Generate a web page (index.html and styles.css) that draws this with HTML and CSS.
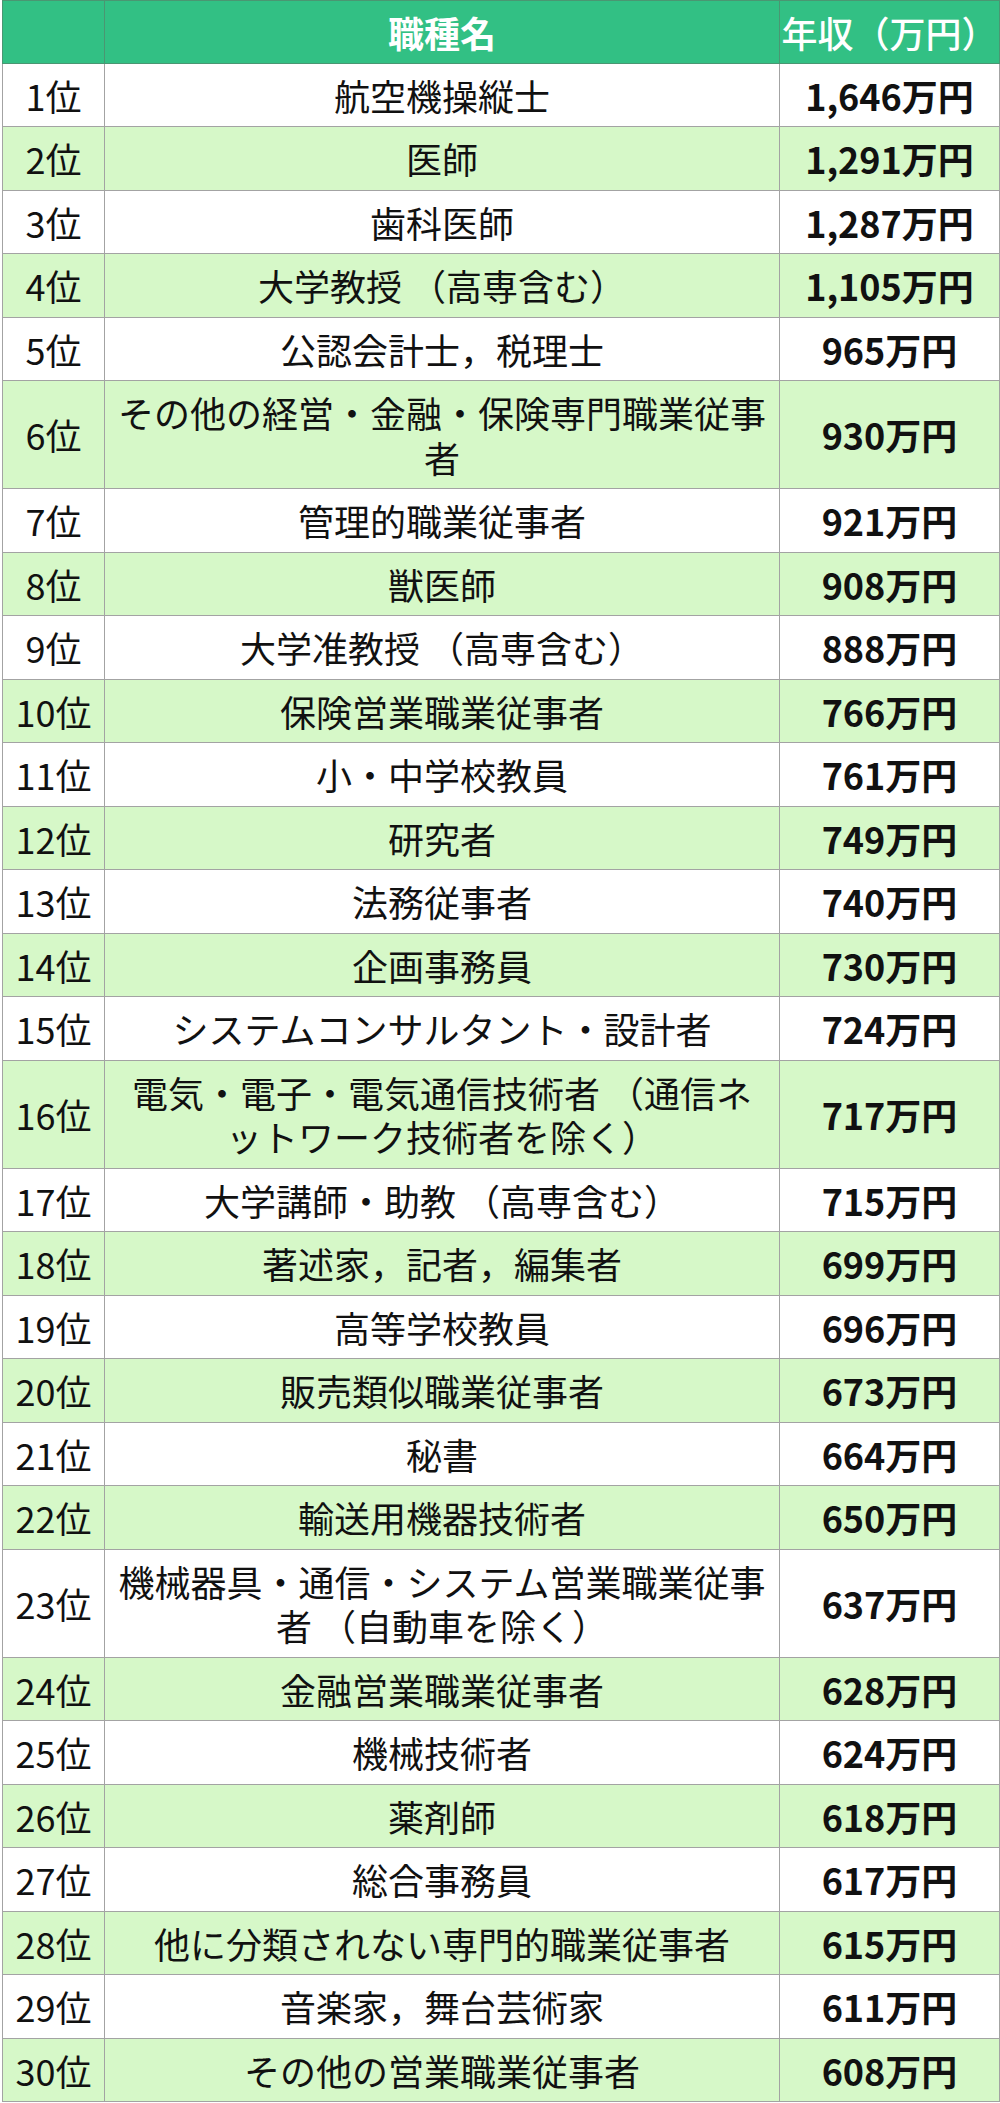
FILE: index.html
```html
<!DOCTYPE html>
<html lang="ja">
<head>
<meta charset="utf-8">
<title>職種別年収ランキング</title>
<link rel="stylesheet" href="styles.css">
</head>
<body>
<table class="rank-table">
  <colgroup>
    <col class="col-rank">
    <col class="col-job">
    <col class="col-pay">
  </colgroup>
  <thead>
    <tr>
      <th class="h-rank"></th>
      <th class="h-job">職種名</th>
      <th class="h-pay">年収（万円）</th>
    </tr>
  </thead>
  <tbody>
    <tr><td class="rank">1位</td><td class="job">航空機操縦士</td><td class="pay">1,646万円</td></tr>
    <tr><td class="rank">2位</td><td class="job">医師</td><td class="pay">1,291万円</td></tr>
    <tr><td class="rank">3位</td><td class="job">歯科医師</td><td class="pay">1,287万円</td></tr>
    <tr><td class="rank">4位</td><td class="job">大学教授 （高専含む）</td><td class="pay">1,105万円</td></tr>
    <tr><td class="rank">5位</td><td class="job">公認会計士，税理士</td><td class="pay">965万円</td></tr>
    <tr><td class="rank">6位</td><td class="job">その他の経営・金融・保険専門職業従事者</td><td class="pay">930万円</td></tr>
    <tr><td class="rank">7位</td><td class="job">管理的職業従事者</td><td class="pay">921万円</td></tr>
    <tr><td class="rank">8位</td><td class="job">獣医師</td><td class="pay">908万円</td></tr>
    <tr><td class="rank">9位</td><td class="job">大学准教授 （高専含む）</td><td class="pay">888万円</td></tr>
    <tr><td class="rank">10位</td><td class="job">保険営業職業従事者</td><td class="pay">766万円</td></tr>
    <tr><td class="rank">11位</td><td class="job">小・中学校教員</td><td class="pay">761万円</td></tr>
    <tr><td class="rank">12位</td><td class="job">研究者</td><td class="pay">749万円</td></tr>
    <tr><td class="rank">13位</td><td class="job">法務従事者</td><td class="pay">740万円</td></tr>
    <tr><td class="rank">14位</td><td class="job">企画事務員</td><td class="pay">730万円</td></tr>
    <tr><td class="rank">15位</td><td class="job">システムコンサルタント・設計者</td><td class="pay">724万円</td></tr>
    <tr><td class="rank">16位</td><td class="job">電気・電子・電気通信技術者 （通信ネットワーク技術者を除く）</td><td class="pay">717万円</td></tr>
    <tr><td class="rank">17位</td><td class="job">大学講師・助教 （高専含む）</td><td class="pay">715万円</td></tr>
    <tr><td class="rank">18位</td><td class="job">著述家，記者，編集者</td><td class="pay">699万円</td></tr>
    <tr><td class="rank">19位</td><td class="job">高等学校教員</td><td class="pay">696万円</td></tr>
    <tr><td class="rank">20位</td><td class="job">販売類似職業従事者</td><td class="pay">673万円</td></tr>
    <tr><td class="rank">21位</td><td class="job">秘書</td><td class="pay">664万円</td></tr>
    <tr><td class="rank">22位</td><td class="job">輸送用機器技術者</td><td class="pay">650万円</td></tr>
    <tr><td class="rank">23位</td><td class="job">機械器具・通信・システム営業職業従事者 （自動車を除く）</td><td class="pay">637万円</td></tr>
    <tr><td class="rank">24位</td><td class="job">金融営業職業従事者</td><td class="pay">628万円</td></tr>
    <tr><td class="rank">25位</td><td class="job">機械技術者</td><td class="pay">624万円</td></tr>
    <tr><td class="rank">26位</td><td class="job">薬剤師</td><td class="pay">618万円</td></tr>
    <tr><td class="rank">27位</td><td class="job">総合事務員</td><td class="pay">617万円</td></tr>
    <tr><td class="rank">28位</td><td class="job">他に分類されない専門的職業従事者</td><td class="pay">615万円</td></tr>
    <tr><td class="rank">29位</td><td class="job">音楽家，舞台芸術家</td><td class="pay">611万円</td></tr>
    <tr><td class="rank">30位</td><td class="job">その他の営業職業従事者</td><td class="pay">608万円</td></tr>
  </tbody>
</table>
</body>
</html>
```

FILE: styles.css
```css
html, body {
  margin: 0;
  padding: 0;
  background: #ffffff;
}

body {
  font-family: "Noto Sans CJK JP", "Noto Sans", sans-serif;
  color: #111111;
}

.rank-table {
  margin-left: 2px;
  width: 997px;
  table-layout: fixed;
  border-collapse: collapse;
  font-size: 36px;
  line-height: 44.5px;
}

.col-rank { width: 102px; }
.col-job { width: 675px; }
.col-pay { width: 220px; }

.rank-table th {
  background: #32c084;
  color: #ffffff;
  padding: 8.5px 0;
  border: 1px solid #4a9672;
  text-align: center;
}

.h-job {
  font-weight: 700;
}

.h-pay {
  font-weight: 500;
}

.rank-table td {
  border: 1px solid #a3a3a3;
  padding: 9px 0;
  text-align: center;
  vertical-align: middle;
}

.rank-table tbody tr:nth-child(even) td {
  background: #d6f8c8;
}

.rank-table td.job {
  padding-left: 11px;
  padding-right: 11px;
}

.rank-table td.pay {
  font-weight: 700;
}
```
